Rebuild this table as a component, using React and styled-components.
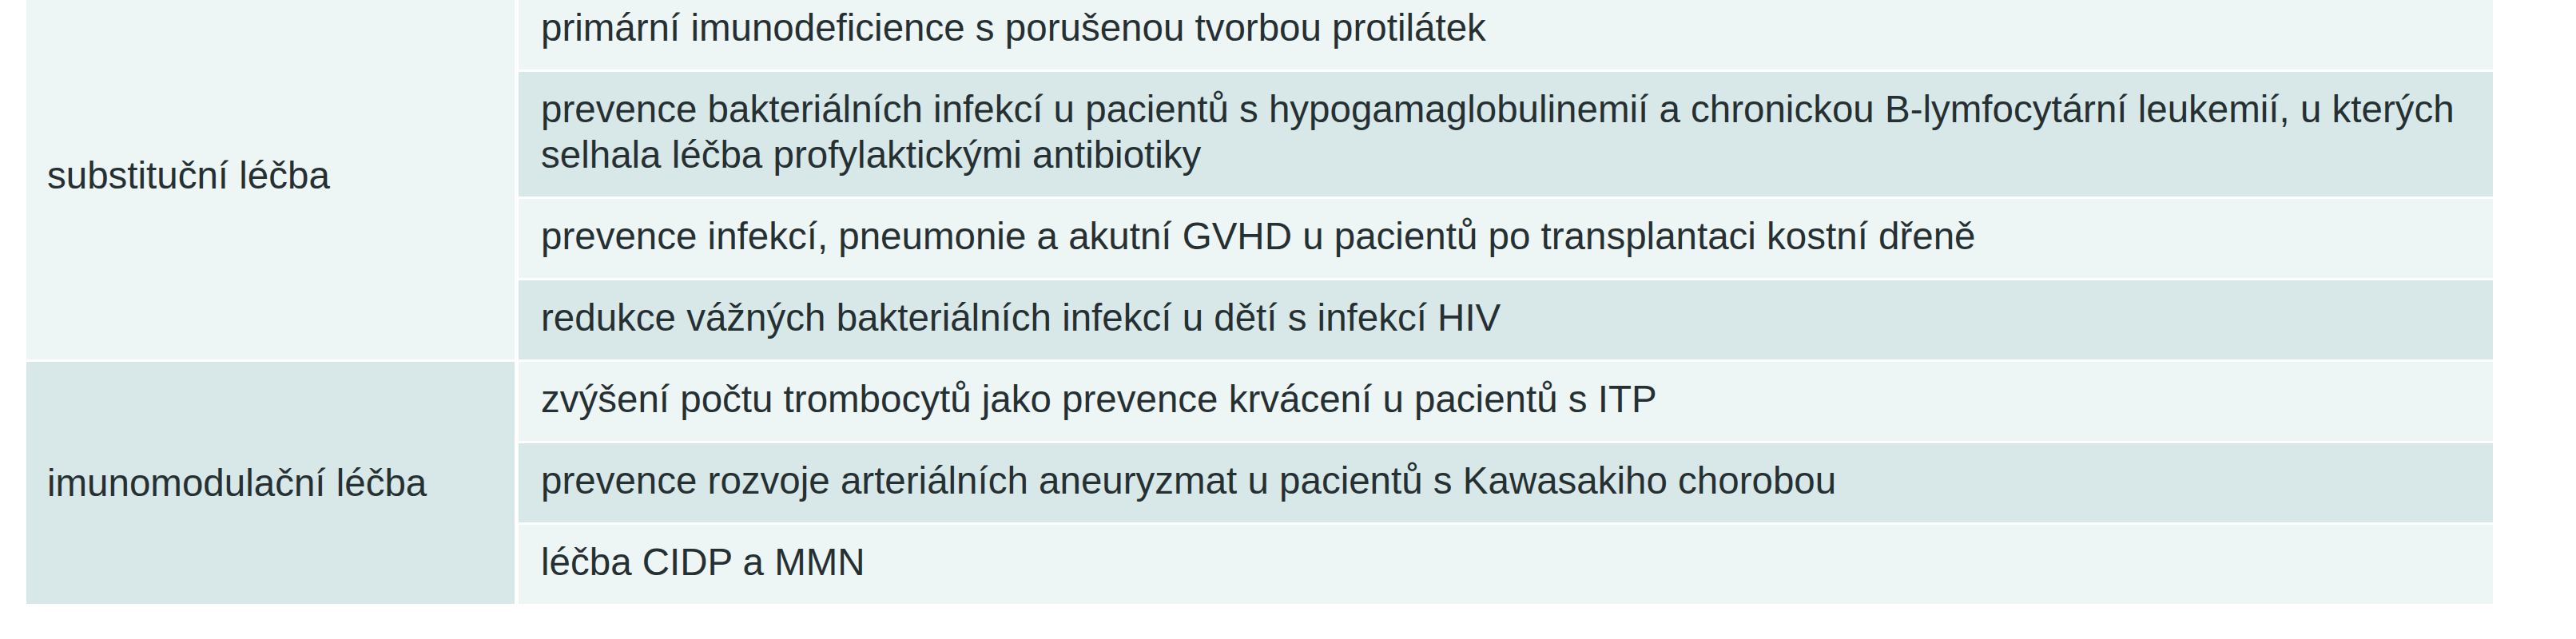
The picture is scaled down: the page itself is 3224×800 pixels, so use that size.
import React from "react";
import styled, { createGlobalStyle } from "styled-components";

const GlobalStyle = createGlobalStyle`
  html, body {
    margin: 0;
    padding: 0;
    background: #ffffff;
  }
  body {
    font-family: "Liberation Sans", Arial, sans-serif;
    color: #263033;
  }
`;

const Page = styled.div`
  width: 3224px;
  height: 800px;
  overflow: hidden;
  background: #ffffff;
`;

const Table = styled.div`
  display: grid;
  grid-template-columns: 611px 2471px;
  column-gap: 5px;
  row-gap: 3px;
  margin: -12px 0 0 33px;
  background: #ffffff;
`;

const tones = {
  light: "#edf5f5",
  dark: "#d8e8e8",
};

const CategoryCell = styled.div`
  grid-column: 1;
  grid-row: span ${(p) => p.$span};
  display: flex;
  align-items: center;
  padding: 0 26px;
  background: ${(p) => tones[p.$tone]};
  font-size: 47.5px;
  line-height: 57px;
  color: #263033;
`;

const IndicationCell = styled.div`
  grid-column: 2;
  padding: 18px 16px 24px 28px;
  background: ${(p) => tones[p.$tone]};
  font-size: 47.5px;
  line-height: 57px;
  color: #263033;
`;

const groups = [
  {
    category: "substituční léčba",
    items: [
      "primární imunodeficience s porušenou tvorbou protilátek",
      "prevence bakteriálních infekcí u pacientů s hypogamaglobulinemií a chronickou B-lymfocytární leukemií, u kterých selhala léčba profylaktickými antibiotiky",
      "prevence infekcí, pneumonie a akutní GVHD u pacientů po transplantaci kostní dřeně",
      "redukce vážných bakteriálních infekcí u dětí s infekcí HIV",
    ],
  },
  {
    category: "imunomodulační léčba",
    items: [
      "zvýšení počtu trombocytů jako prevence krvácení u pacientů s ITP",
      "prevence rozvoje arteriálních aneuryzmat u pacientů s Kawasakiho chorobou",
      "léčba CIDP a MMN",
    ],
  },
];

export default function App() {
  let rowIndex = 0;
  return (
    <Page>
      <GlobalStyle />
      <Table>
        {groups.map((g, gi) => (
          <React.Fragment key={g.category}>
            <CategoryCell $span={g.items.length} $tone={gi % 2 === 0 ? "light" : "dark"}>
              {g.category}
            </CategoryCell>
            {g.items.map((item) => {
              const tone = rowIndex % 2 === 0 ? "light" : "dark";
              rowIndex += 1;
              return (
                <IndicationCell key={item} $tone={tone}>
                  {item}
                </IndicationCell>
              );
            })}
          </React.Fragment>
        ))}
      </Table>
    </Page>
  );
}
